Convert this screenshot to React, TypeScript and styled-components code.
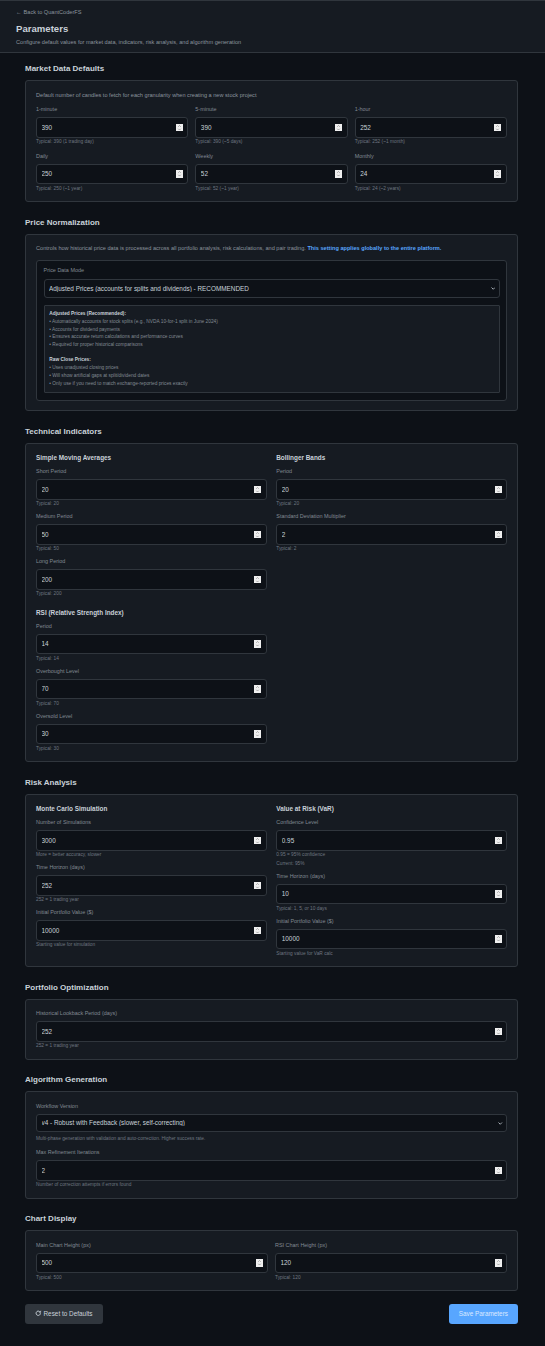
import React from "react";
import styled, { createGlobalStyle } from "styled-components";

const Global = createGlobalStyle`
  html, body { margin: 0; padding: 0; background: #0d1117; }
  #root { zoom: 0.5; font-family: "Liberation Sans", Arial, sans-serif; color: #c9d1d9; }
  * { box-sizing: border-box; }
`;

const Page = styled.div`
  min-height: 2692px;
  background: #0d1117;
`;
const Header = styled.header`
  height: 106px;
  padding: 16px 32px 0;
  background: #161b22;
  border-top: 2px solid #30363d;
  border-bottom: 2px solid #30363d;
`;
const BackLink = styled.a`
  display: block;
  font-size: 11.2px;
  line-height: 14px;
  color: #8b949e;
`;
const BackArrow = styled.span`
  margin-right: 4px;
`;
const Title = styled.h1`
  margin: 14px 0 0;
  font-size: 19.2px;
  line-height: 24px;
  font-weight: 600;
  color: #c9d1d9;
`;
const Subtitle = styled.p`
  margin: 8px 0 0;
  font-size: 11.2px;
  line-height: 14px;
  color: #8b949e;
`;
const Main = styled.main`
  padding: 22px 54px 44px 50px;
`;
const Section = styled.section`
  margin-bottom: 31px;
  &:last-of-type { margin-bottom: 25px; }
`;
const SectionTitle = styled.h2`
  margin: 0 0 14px;
  font-size: 16px;
  line-height: 18px;
  font-weight: 600;
  color: #c9d1d9;
`;
const Card = styled.div`
  padding: 21px 20px 19px;
  background: #161b22;
  border: 2px solid #30363d;
  border-radius: 6px;
`;
const Description = styled.p`
  margin: 0 0 15px;
  font-size: 11.2px;
  line-height: 14px;
  color: #8b949e;
`;
const Emphasis = styled.strong`
  color: #58a6ff;
  font-weight: 700;
`;
const Grid = styled.div<{ $cols: number; $gap: number; $rowGap?: number }>`
  display: grid;
  grid-template-columns: repeat(${(p) => p.$cols}, minmax(0, 1fr));
  column-gap: ${(p) => p.$gap}px;
  row-gap: ${(p) => p.$rowGap ?? 0}px;
  align-items: start;
`;
const Stack = styled.div<{ $gap: number }>`
  display: flex;
  flex-direction: column;
  gap: ${(p) => p.$gap}px;
`;
const GroupTitle = styled.h3`
  margin: 0 0 12px;
  font-size: 12.8px;
  line-height: 16px;
  font-weight: 600;
  color: #c9d1d9;
`;
const Label = styled.label`
  display: block;
  margin-bottom: 8px;
  font-size: 10.9px;
  line-height: 14px;
  color: #828a93;
`;
const InputWrap = styled.div`
  position: relative;
`;
const NumberInput = styled.input`
  display: block;
  width: 100%;
  height: 41px;
  padding: 0 9px;
  font-family: inherit;
  font-size: 12.8px;
  color: #c9d1d9;
  background: #0d1117;
  border: 2px solid #30363d;
  border-radius: 6px;
  outline: none;
  appearance: textfield;
  &::-webkit-inner-spin-button,
  &::-webkit-outer-spin-button { appearance: none; margin: 0; }
`;
const Spinner = styled.svg`
  position: absolute;
  top: 50%;
  right: 11px;
  width: 14px;
  height: 15px;
  margin-top: -7.5px;
  background: #efefef;
`;
const SelectWrap = styled.div`
  position: relative;
`;
const Select = styled.select`
  display: block;
  width: 100%;
  height: 37px;
  padding: 0 9px;
  font-family: inherit;
  font-size: 12.8px;
  color: #c9d1d9;
  background: #0d1117;
  border: 2px solid #30363d;
  border-radius: 6px;
  outline: none;
  appearance: none;
`;
const Chevron = styled.svg`
  position: absolute;
  top: 50%;
  right: 9px;
  width: 9px;
  height: 6px;
  margin-top: -2px;
`;
const Hint = styled.div<{ $gap?: number }>`
  margin-top: ${(p) => p.$gap ?? 3}px;
  font-size: 9.6px;
  line-height: 12px;
  color: #6e7681;
`;
const ModeBox = styled.div`
  padding: 13px;
  background: #0d1117;
  border: 2px solid #30363d;
  border-radius: 6px;
`;
const ModeLabel = styled(Label)`
  margin-bottom: 10px;
`;
const InfoBox = styled.div`
  margin-top: 14px;
  padding: 9.5px;
  background: #161b22;
  border: 2px solid #30363d;
  border-radius: 2px;
  font-size: 9.6px;
  line-height: 15.4px;
  color: #828a93;
`;
const InfoHead = styled.strong`
  display: block;
  color: #c9d1d9;
  font-weight: 700;
`;
const InfoLine = styled.div``;
const InfoSpacer = styled.div`
  height: 15.4px;
`;
const Footer = styled.div`
  display: flex;
  justify-content: space-between;
  align-items: center;
`;
const Button = styled.button<{ $primary?: boolean }>`
  display: inline-flex;
  align-items: center;
  gap: 4px;
  height: 40px;
  padding: 0 20px;
  font-family: inherit;
  font-size: 12.8px;
  color: ${(p) => (p.$primary ? "#dce9ff" : "#c9d1d9")};
  background: ${(p) => (p.$primary ? "#58a6ff" : "#30363d")};
  border: none;
  border-radius: 6px;
`;

type F = { label: string; value: string | number; hint: string; extra?: string };

function Field({ label, value, hint, extra }: F) {
  return (
    <div>
      <Label>{label}</Label>
      <InputWrap>
        <NumberInput type="number" defaultValue={value} />
        <Spinner viewBox="0 0 14 15" fill="none" stroke="#8a8a8a" strokeWidth="1.4" aria-hidden="true">
          <path d="M4.5 5.5 7 3l2.5 2.5M4.5 9.5 7 12l2.5-2.5" />
        </Spinner>
      </InputWrap>
      <Hint>{hint}</Hint>
      {extra && <Hint $gap={5}>{extra}</Hint>}
    </div>
  );
}

const market: F[] = [
  { label: "1-minute", value: 390, hint: "Typical: 390 (1 trading day)" },
  { label: "5-minute", value: 390, hint: "Typical: 390 (~5 days)" },
  { label: "1-hour", value: 252, hint: "Typical: 252 (~1 month)" },
  { label: "Daily", value: 250, hint: "Typical: 250 (~1 year)" },
  { label: "Weekly", value: 52, hint: "Typical: 52 (~1 year)" },
  { label: "Monthly", value: 24, hint: "Typical: 24 (~2 years)" },
];
const sma: F[] = [
  { label: "Short Period", value: 20, hint: "Typical: 20" },
  { label: "Medium Period", value: 50, hint: "Typical: 50" },
  { label: "Long Period", value: 200, hint: "Typical: 200" },
];
const rsi: F[] = [
  { label: "Period", value: 14, hint: "Typical: 14" },
  { label: "Overbought Level", value: 70, hint: "Typical: 70" },
  { label: "Oversold Level", value: 30, hint: "Typical: 30" },
];
const bollinger: F[] = [
  { label: "Period", value: 20, hint: "Typical: 20" },
  { label: "Standard Deviation Multiplier", value: 2, hint: "Typical: 2" },
];
const monte: F[] = [
  { label: "Number of Simulations", value: 3000, hint: "More = better accuracy, slower" },
  { label: "Time Horizon (days)", value: 252, hint: "252 = 1 trading year" },
  { label: "Initial Portfolio Value ($)", value: 10000, hint: "Starting value for simulation" },
];
const valueAtRisk: F[] = [
  { label: "Confidence Level", value: 0.95, hint: "0.95 = 95% confidence", extra: "Current: 95%" },
  { label: "Time Horizon (days)", value: 10, hint: "Typical: 1, 5, or 10 days" },
  { label: "Initial Portfolio Value ($)", value: 10000, hint: "Starting value for VaR calc" },
];

const adjusted = [
  "• Automatically accounts for stock splits (e.g., NVDA 10-for-1 split in June 2024)",
  "• Accounts for dividend payments",
  "• Ensures accurate return calculations and performance curves",
  "• Required for proper historical comparisons",
];
const raw = [
  "• Uses unadjusted closing prices",
  "• Will show artificial gaps at split/dividend dates",
  "• Only use if you need to match exchange-reported prices exactly",
];

const Fields = ({ items }: { items: F[] }) => (
  <Stack $gap={12}>
    {items.map((f) => (
      <Field key={f.label} {...f} />
    ))}
  </Stack>
);

function SelectField({ options }: { options: string[] }) {
  return (
    <SelectWrap>
      <Select defaultValue={options[0]}>
        {options.map((o) => (
          <option key={o} value={o}>
            {o}
          </option>
        ))}
      </Select>
      <Chevron viewBox="0 0 9 6" fill="none" stroke="#c9d1d9" strokeWidth="1.6" aria-hidden="true">
        <path d="M1 1l3.5 3.5L8 1" />
      </Chevron>
    </SelectWrap>
  );
}

export default function App() {
  return (
    <Page>
      <Global />
      <Header>
        <BackLink>
          <BackArrow>←</BackArrow>Back to QuantCoderFS
        </BackLink>
        <Title>Parameters</Title>
        <Subtitle>Configure default values for market data, indicators, risk analysis, and algorithm generation</Subtitle>
      </Header>
      <Main>
        <Section>
          <SectionTitle>Market Data Defaults</SectionTitle>
          <Card>
            <Description>Default number of candles to fetch for each granularity when creating a new stock project</Description>
            <Grid $cols={3} $gap={14} $rowGap={15}>
              {market.map((f) => (
                <Field key={f.label} {...f} />
              ))}
            </Grid>
          </Card>
        </Section>

        <Section>
          <SectionTitle>Price Normalization</SectionTitle>
          <Card>
            <Description>
              Controls how historical price data is processed across all portfolio analysis, risk calculations, and pair trading.{" "}
              <Emphasis>This setting applies globally to the entire platform.</Emphasis>
            </Description>
            <ModeBox>
              <ModeLabel>Price Data Mode</ModeLabel>
              <SelectField options={["Adjusted Prices (accounts for splits and dividends) - RECOMMENDED", "Raw Close Prices"]} />
              <InfoBox>
                <InfoHead>Adjusted Prices (Recommended):</InfoHead>
                {adjusted.map((t) => (
                  <InfoLine key={t}>{t}</InfoLine>
                ))}
                <InfoSpacer />
                <InfoHead>Raw Close Prices:</InfoHead>
                {raw.map((t) => (
                  <InfoLine key={t}>{t}</InfoLine>
                ))}
              </InfoBox>
            </ModeBox>
          </Card>
        </Section>

        <Section>
          <SectionTitle>Technical Indicators</SectionTitle>
          <Card>
            <Grid $cols={2} $gap={19}>
              <Stack $gap={23}>
                <div>
                  <GroupTitle>Simple Moving Averages</GroupTitle>
                  <Fields items={sma} />
                </div>
                <div>
                  <GroupTitle>RSI (Relative Strength Index)</GroupTitle>
                  <Fields items={rsi} />
                </div>
              </Stack>
              <div>
                <GroupTitle>Bollinger Bands</GroupTitle>
                <Fields items={bollinger} />
              </div>
            </Grid>
          </Card>
        </Section>

        <Section>
          <SectionTitle>Risk Analysis</SectionTitle>
          <Card>
            <Grid $cols={2} $gap={19}>
              <div>
                <GroupTitle>Monte Carlo Simulation</GroupTitle>
                <Fields items={monte} />
              </div>
              <div>
                <GroupTitle>Value at Risk (VaR)</GroupTitle>
                <Fields items={valueAtRisk} />
              </div>
            </Grid>
          </Card>
        </Section>

        <Section>
          <SectionTitle>Portfolio Optimization</SectionTitle>
          <Card>
            <Field label="Historical Lookback Period (days)" value={252} hint="252 = 1 trading year" />
          </Card>
        </Section>

        <Section>
          <SectionTitle>Algorithm Generation</SectionTitle>
          <Card>
            <Stack $gap={15}>
              <div>
                <Label>Workflow Version</Label>
                <SelectField options={["v4 - Robust with Feedback (slower, self-correcting)"]} />
                <Hint $gap={7}>Multi-phase generation with validation and auto-correction. Higher success rate.</Hint>
              </div>
              <Field label="Max Refinement Iterations" value={2} hint="Number of correction attempts if errors found" />
            </Stack>
          </Card>
        </Section>

        <Section>
          <SectionTitle>Chart Display</SectionTitle>
          <Card>
            <Grid $cols={2} $gap={14}>
              <Field label="Main Chart Height (px)" value={500} hint="Typical: 500" />
              <Field label="RSI Chart Height (px)" value={120} hint="Typical: 120" />
            </Grid>
          </Card>
        </Section>

        <Footer>
          <Button>
            <svg width="13" height="13" viewBox="0 0 24 24" fill="none" stroke="currentColor" strokeWidth="3.4" aria-hidden="true">
              <path d="M20 12a8 8 0 1 1-2.6-5.9" />
              <path d="M21.5 2.5v6.5h-6.5z" fill="currentColor" strokeWidth="1" />
            </svg>
            Reset to Defaults
          </Button>
          <Button $primary>Save Parameters</Button>
        </Footer>
      </Main>
    </Page>
  );
}
